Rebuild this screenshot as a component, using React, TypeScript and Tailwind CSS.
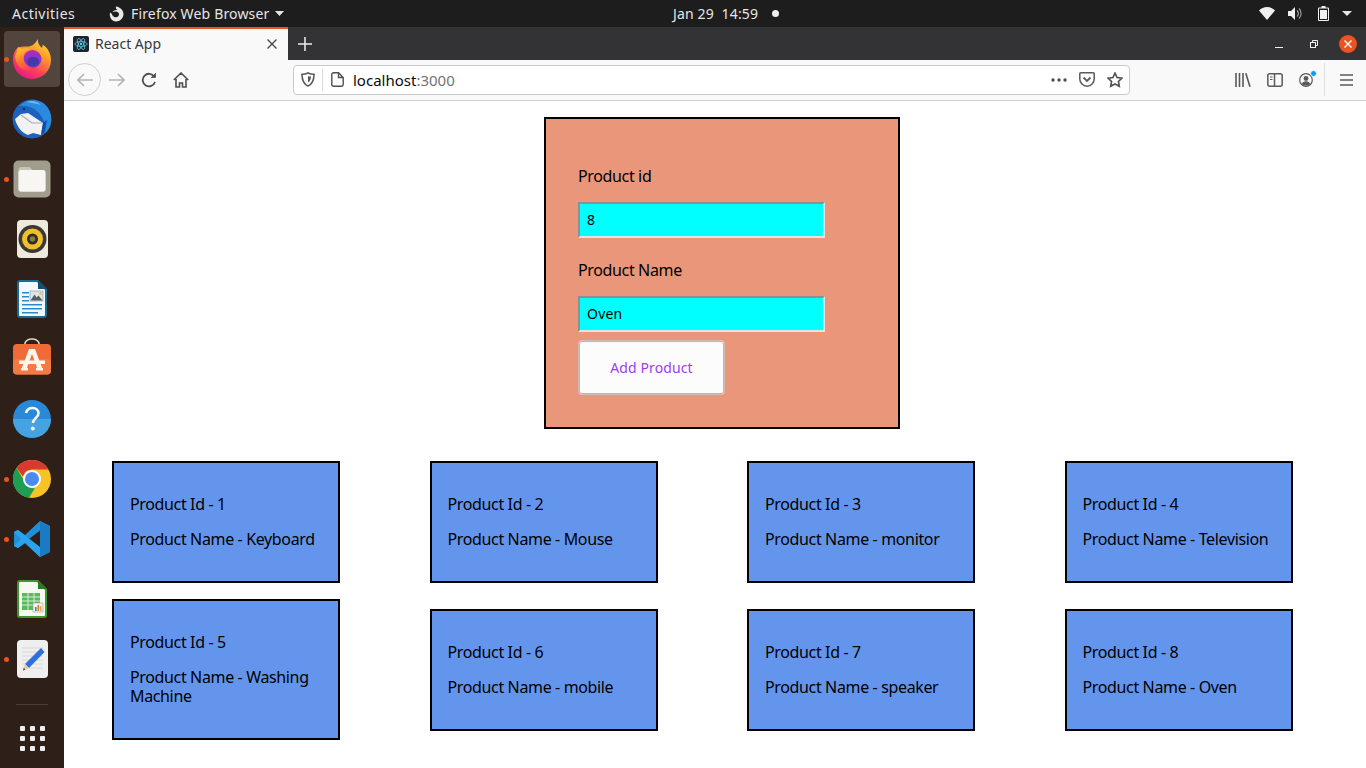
import type { ReactNode } from 'react';

const products = [
  { id: 1, name: 'Keyboard' },
  { id: 2, name: 'Mouse' },
  { id: 3, name: 'monitor' },
  { id: 4, name: 'Television' },
  { id: 5, name: 'Washing Machine' },
  { id: 6, name: 'mobile' },
  { id: 7, name: 'speaker' },
  { id: 8, name: 'Oven' },
];

const FirefoxIcon = () => (
  <svg width="38" height="40" viewBox="0 0 38 40">
    <defs>
      <linearGradient id="ffOuter" x1="0.85" y1="0" x2="0.25" y2="1">
        <stop offset="0" stopColor="#ffe03d" />
        <stop offset="0.35" stopColor="#ff9a26" />
        <stop offset="0.7" stopColor="#ff3f5a" />
        <stop offset="1" stopColor="#e4168c" />
      </linearGradient>
      <linearGradient id="ffInner" x1="0.5" y1="0" x2="0.5" y2="1">
        <stop offset="0" stopColor="#b02ac0" />
        <stop offset="1" stopColor="#6a3ac8" />
      </linearGradient>
      <linearGradient id="ffTail" x1="0.2" y1="0" x2="0.6" y2="1">
        <stop offset="0" stopColor="#ffc436" />
        <stop offset="0.5" stopColor="#ff7a2a" />
        <stop offset="1" stopColor="#ff3a62" />
      </linearGradient>
    </defs>
    <path d="M25 0c-.5 4 1 6.500 4 9 .5-1 .7-2 .6-3.500C35 9 38 15 38 21c0 10.500-8.500 19-19 19S0 31.500 0 21c0-4 1-7.500 3-10.500C5 8 9 7 13 7.500c5 .5 9-2 12-7.500z" fill="url(#ffOuter)" />
    <circle cx="19.500" cy="20" r="9" fill="url(#ffInner)" />
    <ellipse cx="20" cy="22.500" rx="6" ry="4.500" fill="#4538a8" />
    <path d="M2 17c2-5 6-8 11-8 2 0 3.500.5 4.500 1.500-4 .5-7 3.500-7 8 0 6 5.500 11 13 10.500-3 3-8 4-12.500 2C6 29 2.500 23.500 2 17z" fill="url(#ffTail)" />
    <path d="M5 8c2 .5 4 1.500 5.500 3-2.500 1-5 3-6.500 5.500-.5-3 0-6 1-8.500z" fill="#ffb52e" />
  </svg>
);

const ThunderbirdIcon = () => (
  <svg width="40" height="40" viewBox="0 0 40 40">
    <circle cx="20" cy="20" r="19.500" fill="#1c62bd" />
    <path d="M7 7c6-6 16-8 24-3 6 4 9 12 8 20-1 4-3 8-6 10 1-8-1-15-7-21C21 8 14 6 7 7z" fill="#2a8ae0" />
    <path d="M14 3c5-2 11-1 15 3-5-1.500-10-2-15-3z" fill="#6db6ee" />
    <path d="M3 20l6-5 7-1 15 10-2 12-8-2-5 2C10 34 5 28 3 20z" fill="#f2f2f5" />
    <path d="M9 16l11 8 10 0" stroke="#a9aab5" strokeWidth="1.100" fill="none" />
    <path d="M31 24l4-3-2 10-4 5z" fill="#0f4ea3" />
    <circle cx="12" cy="10" r="1.200" fill="#0c2e66" />
  </svg>
);

const FilesIcon = () => (
  <svg width="38" height="38" viewBox="0 0 38 38">
    <rect x="0.500" y="0.500" width="37" height="37" rx="5" fill="#a09d8d" />
    <path d="M5.500 10a3 3 0 0 1 3-3h8l3 3h10a3 3 0 0 1 3 3v16a3 3 0 0 1-3 3h-21a3 3 0 0 1-3-3z" fill="#c8c5b8" />
    <rect x="5.500" y="10" width="27" height="21.500" rx="2.500" fill="#f7f6f3" />
  </svg>
);

const RhythmboxIcon = () => (
  <svg width="31" height="38" viewBox="0 0 31 38">
    <rect width="31" height="38" rx="4" fill="#ece9dd" />
    <circle cx="15.500" cy="19" r="14" fill="#3a3834" />
    <circle cx="15.500" cy="19" r="10.500" fill="#f0c02c" />
    <circle cx="15.500" cy="19" r="5.500" fill="#2d2b28" />
    <circle cx="15.500" cy="19" r="2.800" fill="#8b7c3c" />
  </svg>
);

const WriterIcon = () => (
  <svg width="30" height="38" viewBox="0 0 30 38">
    <path d="M3 0h18l9 9v26a3 3 0 0 1-3 3H3a3 3 0 0 1-3-3V3a3 3 0 0 1 3-3z" fill="#1b6b93" />
    <path d="M3 2h17l8 8v25a1 1 0 0 1-1 1H3a1 1 0 0 1-1-1V3a1 1 0 0 1 1-1z" fill="#f4f8fb" />
    <path d="M21 0l9 9h-9z" fill="#124f70" />
    <rect x="5" y="12" width="7" height="1.500" fill="#2b8bc6" />
    <rect x="5" y="16" width="7" height="1.500" fill="#2b8bc6" />
    <rect x="5" y="20" width="7" height="1.500" fill="#2b8bc6" />
    <rect x="5" y="24" width="20" height="1.500" fill="#2b8bc6" />
    <rect x="5" y="28" width="20" height="1.500" fill="#2b8bc6" />
    <rect x="5" y="32" width="16" height="1.500" fill="#2b8bc6" />
    <rect x="13" y="11" width="13" height="10" fill="#dfe3e6" stroke="#8b97a0" strokeWidth="0.600" />
    <path d="M13.500 20.500l4-6 2 3 2-2 4 5z" fill="#555e66" />
    <circle cx="23.500" cy="13.500" r="1.200" fill="#f0c02c" />
  </svg>
);

const SoftwareIcon = () => (
  <svg width="38" height="37" viewBox="0 0 38 37" className="-mt-[6px]">
    <path d="M12 7V5.500a7 4.500 0 0 1 14 0V7" fill="none" stroke="#e2d7c3" strokeWidth="1.600" />
    <rect y="6" width="38" height="30.500" rx="4" fill="#ef6a36" />
    <rect y="21" width="38" height="15.500" rx="4" fill="#f27a45" />
    <path d="M16 11h6l7.500 20h-5L19 16l-5.500 15h-5z" fill="#fdf6ef" />
    <rect x="6" y="22.500" width="26" height="3.500" fill="#fdf6ef" />
    <rect x="8" y="30" width="7" height="2.500" fill="#fdf6ef" />
    <rect x="23" y="30" width="7" height="2.500" fill="#fdf6ef" />
  </svg>
);

const HelpIcon = () => (
  <svg width="38" height="38" viewBox="0 0 38 38">
    <circle cx="19" cy="19" r="19" fill="#2a88d8" />
    <path d="M0 19h38a19 19 0 0 1-38 0z" fill="#45a3e2" />
    <path d="M13 13c1-4 4-5 6.500-5 3.500 0 6 2 6 5.500 0 4-5.500 4.500-5.500 9.500" fill="none" stroke="#f5f8fb" strokeWidth="2.600" />
    <circle cx="19.800" cy="28.500" r="2" fill="#f5f8fb" />
  </svg>
);

const ChromeIcon = () => (
  <svg width="38" height="38" viewBox="0 0 38 38">
    <circle cx="19" cy="19" r="19" fill="#f7c325" />
    <path d="M19 0a19 19 0 0 1 16.500 9.500H19a9.500 9.500 0 0 0-9 7L3.500 8A19 19 0 0 1 19 0z" fill="#d93a30" />
    <path d="M3.500 8l8 13.500a9 9 0 0 0 10.500 6.500L16 37.800A19 19 0 0 1 3.500 8z" fill="#1f9d55" />
    <circle cx="19" cy="19" r="9" fill="#fff" />
    <circle cx="19" cy="19" r="7" fill="#4b8bf0" />
  </svg>
);

const VSCodeIcon = () => (
  <svg width="36" height="36" viewBox="0 0 36 36">
    <path d="M26 0l10 5v26l-10 5-15-14-7 5-4-2V11l4-2 7 5z" fill="#1f8fd8" />
    <path d="M26 0l10 5v26l-10 5z" fill="#1a7bc4" />
    <path d="M26 9.500L15 18l11 8.500z" fill="#2e1f18" />
    <path d="M0 11l4-2 22 17v10L11 22l-7 5-4-2 7-7z" fill="#2aa3ea" />
  </svg>
);

const CalcIcon = () => (
  <svg width="30" height="38" viewBox="0 0 30 38">
    <path d="M3 0h18l9 9v26a3 3 0 0 1-3 3H3a3 3 0 0 1-3-3V3a3 3 0 0 1 3-3z" fill="#3b9a2b" />
    <path d="M3 2h17l8 8v25a1 1 0 0 1-1 1H3a1 1 0 0 1-1-1V3a1 1 0 0 1 1-1z" fill="#f6f8f3" />
    <path d="M21 0l9 9h-9z" fill="#2a7a1e" />
    <rect x="5" y="13" width="18" height="17" fill="#5cb85c" />
    <path d="M5 17h18M5 21h18M5 25h18M11 13v17M17 13v17" stroke="#e4f3df" strokeWidth="0.900" />
    <rect x="16" y="23" width="10" height="9" fill="#f4f4f4" stroke="#8a8a8a" strokeWidth="0.500" />
    <rect x="18" y="27" width="1.600" height="4" fill="#2b8bc6" />
    <rect x="20.500" y="25" width="1.600" height="6" fill="#e9752c" />
    <rect x="23" y="26" width="1.600" height="5" fill="#e9b12c" />
  </svg>
);

const TextEditorIcon = () => (
  <svg width="31" height="38" viewBox="0 0 31 38">
    <rect width="31" height="38" rx="4" fill="#efefef" />
    <path d="M5 8h21M5 12h21M5 16h21M5 20h21M5 24h21M5 28h21" stroke="#d2d2d2" strokeWidth="0.800" />
    <path d="M24 8l3.500 4L12 28l-4-4z" fill="#2f6fe0" />
    <path d="M8 24l4 4-6 2.500z" fill="#e7c9a0" />
    <path d="M6.800 28l1.500 1.600-2.300 1z" fill="#333" />
  </svg>
);

const GridIcon = () => (
  <div className="grid grid-cols-3 gap-[5px]">
    {Array.from({ length: 9 }).map((_, i) => (
      <div key={i} className="w-[5px] h-[5px] rounded-[1px] bg-[#eeeeee]" />
    ))}
  </div>
);

const DockItem = ({ children, running, active }: { children: ReactNode; running?: boolean; active?: boolean }) => (
  <div className="relative h-[60px] flex-shrink-0 flex items-center justify-center">
    {running && <div className="absolute left-[4px] top-[27.500px] w-[5px] h-[5px] rounded-full bg-[#e95420]" />}
    <div className={`w-[56px] h-[56px] rounded-[4px] flex items-center justify-center ${active ? 'bg-[#52453e]' : ''}`}>
      {children}
    </div>
  </div>
);

const Dock = () => (
  <aside className="w-16 flex-shrink-0 flex flex-col pt-[2px] bg-[#2e1f18] overflow-hidden">
    <DockItem running active><FirefoxIcon /></DockItem>
    <DockItem><ThunderbirdIcon /></DockItem>
    <DockItem running><FilesIcon /></DockItem>
    <DockItem><RhythmboxIcon /></DockItem>
    <DockItem><WriterIcon /></DockItem>
    <DockItem><SoftwareIcon /></DockItem>
    <DockItem><HelpIcon /></DockItem>
    <DockItem running><ChromeIcon /></DockItem>
    <DockItem running><VSCodeIcon /></DockItem>
    <DockItem><CalcIcon /></DockItem>
    <DockItem running><TextEditorIcon /></DockItem>
    <div className="mx-4 mt-[15px] h-px flex-shrink-0 bg-[#4a3c35]" />
    <div className="h-[66px] flex-shrink-0 flex items-center justify-center"><GridIcon /></div>
  </aside>
);

const TopBar = () => (
  <div className="h-[27px] flex-shrink-0 bg-[#1d1d1d] text-[#e6e6e6] text-[14px] tracking-[0.16px] flex items-center relative">
    <span className="ml-3 w-[93px] tracking-[0.5px]">Activities</span>
    <svg width="18" height="18" viewBox="0 0 18 18" className="ml-[2px]">
      <path d="M9 1.500c-.5 1.500 0 2.500 1.500 3.500C8 4.600 6 5.500 5.500 7.500c.8-.8 2-1.200 3.500-1 2 .3 3 1.500 3 2.800 0 1.800-1.500 3-3.200 3-2 0-3.500-1.500-4-3.500L3 7.500C2 12.500 5 16.500 9 16.500s7.500-3.500 7.500-7.500c0-3.500-3-7-7.500-7.500z" fill="#e8e8e8" />
    </svg>
    <span className="ml-[6px]">Firefox Web Browser</span>
    <svg width="9" height="5" viewBox="0 0 9 5" className="ml-[6px]"><path d="M0 0h9L4.500 5z" fill="#e6e6e6" /></svg>
    <span className="absolute left-[673px] whitespace-pre">Jan 29  14:59</span>
    <div className="absolute left-[772px] top-[10px] w-[7px] h-[7px] rounded-full bg-[#eeeeee]" />
    <div className="ml-auto flex items-center">
      <svg width="16" height="13" viewBox="0 0 16 13"><path d="M0 3.500C2 1.500 5 0 8 0s6 1.500 8 3.500L8 13z" fill="#f0f0f0" /></svg>
      <svg width="15" height="13" viewBox="0 0 15 13" className="ml-[13px]">
        <path d="M0 4h3l4-4v13L3 9H0z" fill="#f0f0f0" />
        <path d="M9 3.500a4 4 0 0 1 0 6M11 1.500a7 7 0 0 1 0 10" stroke="#a8a8a8" strokeWidth="1.100" fill="none" />
      </svg>
      <svg width="11" height="15" viewBox="0 0 11 15" className="ml-[15px]">
        <path d="M3.500 0h4v1.500H10a1 1 0 0 1 1 1V14a1 1 0 0 1-1 1H1a1 1 0 0 1-1-1V2.500a1 1 0 0 1 1-1h2.500z" fill="#f0f0f0" />
        <rect x="1" y="2.500" width="9" height="11.500" fill="#1d1d1d" />
        <rect x="2" y="4" width="7" height="9" fill="#f0f0f0" />
      </svg>
      <svg width="10" height="5" viewBox="0 0 10 5" className="ml-[13px] mr-[14px]"><path d="M0 0h10L5 5z" fill="#e6e6e6" /></svg>
    </div>
  </div>
);

const TabBar = () => (
  <div className="h-[33px] flex-shrink-0 bg-[#333234] flex items-stretch">
    <div className="w-[224px] bg-[#f9f9fa] border-t-[2px] border-[#e95420] flex items-center pl-[9px] pr-[11px] pb-[2px] text-[14px] text-[#38383d]">
      <div className="w-4 h-4 rounded-[2px] bg-[#20232a] flex items-center justify-center">
        <svg width="14" height="14" viewBox="-12 -12 24 24" fill="none" stroke="#61dafb" strokeWidth="1.200">
          <circle r="2" fill="#61dafb" stroke="none" />
          <ellipse rx="10.500" ry="4.200" />
          <ellipse rx="10.500" ry="4.200" transform="rotate(60)" />
          <ellipse rx="10.500" ry="4.200" transform="rotate(120)" />
        </svg>
      </div>
      <span className="ml-[6px]">React App</span>
      <svg width="10" height="10" viewBox="0 0 10 10" className="ml-auto"><path d="M.5.500l9 9M9.500.500l-9 9" stroke="#444" strokeWidth="1.300" /></svg>
    </div>
    <div className="ml-[10px] flex items-center">
      <svg width="14" height="14" viewBox="0 0 14 14"><path d="M7 0v14M0 7h14" stroke="#f0f0f0" strokeWidth="1.500" /></svg>
    </div>
    <div className="ml-auto flex items-center text-white">
      <div className="w-2 h-px bg-[#f0f0f0] mt-[7px] mr-[27px]" />
      <svg width="8" height="8" viewBox="0 0 8 8" fill="none" stroke="#f0f0f0" strokeWidth="1" className="mr-[21px]">
        <rect x="0.500" y="2.500" width="5" height="5" />
        <path d="M2.500 2V.500h5v5H6" />
      </svg>
      <div className="w-[18px] h-[18px] mr-[9px] rounded-full bg-[#e95420] flex items-center justify-center">
        <svg width="8" height="8" viewBox="0 0 8 8"><path d="M.5.500l7 7M7.500.500l-7 7" stroke="#fff" strokeWidth="1.300" /></svg>
      </div>
    </div>
  </div>
);

const Toolbar = () => (
  <div className="h-[41px] flex-shrink-0 bg-[#f9f9fa] border-b border-[#cfcfd0] flex items-center pb-[1px]">
    <div className="ml-[4px] w-[33px] h-[33px] rounded-full border border-[#cfcfd1] flex items-center justify-center">
      <svg width="16" height="14" viewBox="0 0 16 14" fill="none" stroke="#b4b4b6" strokeWidth="1.600"><path d="M16 7H1M7 1L1 7l6 6" /></svg>
    </div>
    <svg width="16" height="14" viewBox="0 0 16 14" fill="none" stroke="#b4b4b6" strokeWidth="1.600" className="ml-[8px]"><path d="M0 7h15M9 1l6 6-6 6" /></svg>
    <svg width="16" height="16" viewBox="0 0 16 16" fill="none" stroke="#4f4f52" strokeWidth="1.800" className="ml-[16px]">
      <path d="M14 10a6.300 6.300 0 1 1-.8-5.500" />
      <path d="M14.500 1v4.500H10" fill="#4f4f52" strokeWidth="0.800" />
    </svg>
    <svg width="16" height="16" viewBox="0 0 16 16" fill="none" stroke="#4f4f52" strokeWidth="1.600" className="ml-[16px]">
      <path d="M.8 8L8 1l7.200 7M3 7v8h3.500v-4h3v4H13V7" />
    </svg>
    <div className="ml-[104px] w-[837px] h-[30px] bg-white border border-[#c9c9cb] rounded-[4px] flex items-center text-[15px] relative">
      <svg width="14" height="15" viewBox="0 0 14 15" fill="none" stroke="#5a5a5d" strokeWidth="1.600" className="ml-[7px]">
        <path d="M7 1c2 1 3.500 1.300 6 1.300 0 5-1 9.700-6 11.700-5-2-6-6.700-6-11.700C3.500 2.300 5 2 7 1z" />
        <path d="M7 4c1 .4 2 .6 3 .6 0 2.500-.8 5-3 6z" fill="#5a5a5d" stroke="none" />
      </svg>
      <div className="ml-[7px] w-px h-[22px] bg-[#dcdcdd]" />
      <svg width="13" height="15" viewBox="0 0 13 15" fill="none" stroke="#4f4f52" strokeWidth="1.400" className="ml-[8px]">
        <path d="M2.500.800h5l4.700 4.700v7a1.700 1.700 0 0 1-1.700 1.700h-8A1.700 1.700 0 0 1 .8 12.500v-10A1.700 1.700 0 0 1 2.500.800zM7.500.800v4.700h4.700" />
      </svg>
      <span className="ml-[9px] mt-[1px] text-[#0c0c0d]">localhost<span className="text-[#737373]">:3000</span></span>
      <div className="ml-auto flex items-center mr-[6px]">
        <svg width="16" height="4" viewBox="0 0 16 4" fill="#4f4f52"><circle cx="2" cy="2" r="1.700" /><circle cx="8" cy="2" r="1.700" /><circle cx="14" cy="2" r="1.700" /></svg>
        <svg width="16" height="15" viewBox="0 0 16 15" fill="none" stroke="#5a5a5d" strokeWidth="1.500" className="ml-[12px]">
          <path d="M1.800.800h12.400a1 1 0 0 1 1 1V7a7.200 7.200 0 0 1-14.400 0V1.800a1 1 0 0 1 1-1z" />
          <path d="M4.500 5.500L8 9l3.500-3.500" strokeWidth="1.800" />
        </svg>
        <svg width="16" height="16" viewBox="0 0 16 16" fill="none" stroke="#4f4f52" strokeWidth="1.600" className="ml-[12px]">
          <path d="M8 1.200l2.100 4.400 4.900.6-3.600 3.300.9 4.800L8 12l-4.300 2.300.9-4.800L1 6.200l4.900-.6z" />
        </svg>
      </div>
    </div>
    <div className="ml-auto flex items-center">
      <svg width="16" height="14" viewBox="0 0 16 14" fill="none" stroke="#5a5a5d" strokeWidth="1.600">
        <path d="M1 0v14M4.500 0v14M8 0v14M10.800 .2L15 13.800" />
      </svg>
      <svg width="16" height="14" viewBox="0 0 16 14" fill="none" stroke="#5a5a5d" strokeWidth="1.500" className="ml-[16px]">
        <rect x="0.800" y="0.800" width="14.400" height="12.400" rx="2" />
        <path d="M7.500 1v12" />
        <path d="M3 4h2.500M3 6.500h2.500" strokeWidth="1.200" />
      </svg>
      <div className="relative ml-[16px] w-[14px] h-[14px]">
        <svg width="14" height="14" viewBox="0 0 14 14" fill="none" stroke="#5a5a5d" strokeWidth="1.200">
          <circle cx="7" cy="7" r="6.300" />
          <circle cx="7" cy="5.500" r="2.400" fill="#5a5a5d" stroke="none" />
          <path d="M2.700 11c1-2 2.500-2.700 4.300-2.700s3.300.7 4.300 2.700a6 6 0 0 1-8.600 0z" fill="#5a5a5d" stroke="none" />
        </svg>
        <div className="absolute -top-[3px] -right-[4px] w-[7px] h-[7px] rounded-full bg-[#0a9dff] border border-[#f9f9fa]" />
      </div>
      <div className="ml-[11px] w-px h-[33px] bg-[#dedee0]" />
      <svg width="13" height="12" viewBox="0 0 13 12" fill="none" stroke="#5a5a5d" strokeWidth="1.700" className="ml-[15px] mr-[13px]">
        <path d="M0 1h13M0 6h13M0 11h13" />
      </svg>
    </div>
  </div>
);

const Field = ({ label, value }: { label: string; value: string }) => (
  <div>
    <label className="block h-6 leading-6">{label}</label>
    <input
      readOnly
      value={value}
      className="mt-[14px] block w-[247px] h-9 pl-[7px] pb-[2px] text-[14px] tracking-[0.2px] text-black bg-[#00ffff] border-2 border-t-[#8f8f8f] border-l-[#8f8f8f] border-r-[#e3e3e3] border-b-[#e3e3e3] outline-none"
    />
  </div>
);

const ProductForm = () => (
  <form className="ml-[480px] w-[356px] border-2 border-black bg-[#e9967a] pl-8 pt-[45px] pb-8">
    <div className="flex flex-col gap-5">
      <Field label="Product id" value="8" />
      <Field label="Product Name" value="Oven" />
    </div>
    <button
      type="button"
      className="mt-2 block w-[147px] h-[55px] rounded-[4px] bg-[#fcfcfc] border border-[#cdbfb9] shadow-[inset_0_0_0_1px_#f0a58a] text-[14px] tracking-[0.1px] text-[#9b3cf0]"
    >
      Add Product
    </button>
  </form>
);

const ProductCard = ({ id, name }: { id: number; name: string }) => (
  <div className="w-[228px] border-2 border-black bg-[#6495ed] px-4 py-8 leading-[19px] text-black">
    <p>{`Product Id - ${id}`}</p>
    <p className="mt-4">{`Product Name - ${name}`}</p>
  </div>
);

export default function App() {
  return (
    <div className="h-screen overflow-hidden flex flex-col bg-white text-[16px]" style={{ fontFamily: '"Noto Sans", sans-serif' }}>
      <TopBar />
      <div className="flex-1 flex min-h-0">
        <Dock />
        <div className="flex-1 flex flex-col min-w-0">
          <TabBar />
          <Toolbar />
          <main className="flex-1 pt-4 tracking-[-0.36px]">
            <ProductForm />
            <div className="mt-8 ml-12 grid grid-cols-[repeat(4,317.5px)] gap-y-4 items-center">
              {products.map((p) => (
                <ProductCard key={p.id} id={p.id} name={p.name} />
              ))}
            </div>
          </main>
        </div>
      </div>
    </div>
  );
}
